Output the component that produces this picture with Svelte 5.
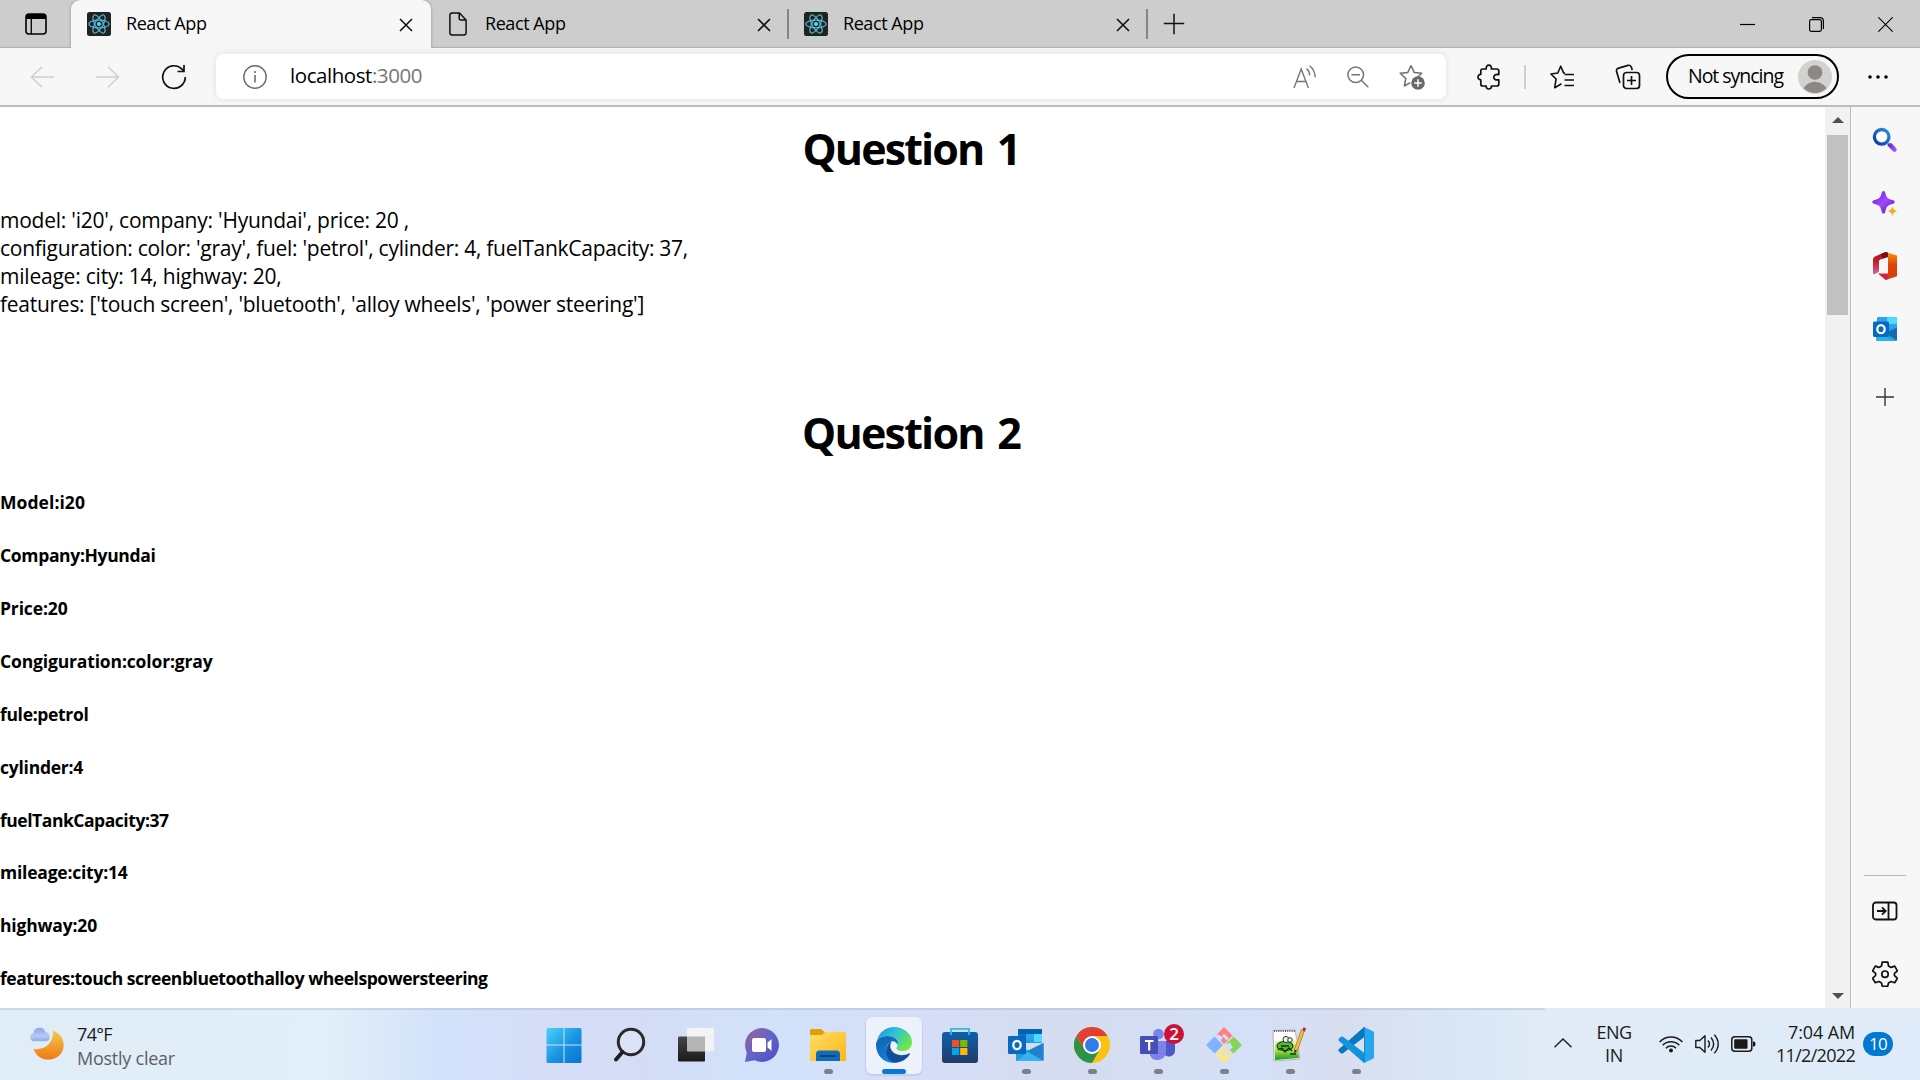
<script>
  const paragraph = [
    ["model: 'i20', company: 'Hyundai', price: 20 ,", 409],
    ["configuration: color: 'gray', fuel: 'petrol', cylinder: 4, fuelTankCapacity: 37,", 688],
    ["mileage: city: 14, highway: 20,", 281.5],
    ["features: ['touch screen', 'bluetooth', 'alloy wheels', 'power steering']", 644]
  ];

  const details = [
    ['Model:i20', 85],
    ['Company:Hyundai', 155.5],
    ['Price:20', 67.5],
    ['Congiguration:color:gray', 212.5],
    ['fule:petrol', 88.5],
    ['cylinder:4', 83],
    ['fuelTankCapacity:37', 168.5],
    ['mileage:city:14', 127.5],
    ['highway:20', 97],
    ['features:touch screenbluetoothalloy wheelspowersteering', 487.5]
  ];

  const apps = [
    { id: 'start' },
    { id: 'search' },
    { id: 'taskview' },
    { id: 'chat' },
    { id: 'explorer', open: true },
    { id: 'edge', active: true },
    { id: 'store' },
    { id: 'outlook', open: true },
    { id: 'chrome', open: true },
    { id: 'teams', open: true },
    { id: 'git', open: true },
    { id: 'notepad', open: true },
    { id: 'vscode', open: true }
  ];

  // Spreads the difference between natural and wanted width over the letters.
  function fit(node, width) {
    const natural = node.getBoundingClientRect().width;
    node.style.letterSpacing = (width - natural) / node.textContent.length + 'px';
  }
</script>

{#snippet reactIcon()}
  <svg class="fav" width="24" height="24" viewBox="0 0 24 24">
    <rect width="24" height="24" rx="2.5" fill="#222" />
    <g fill="none" stroke="#53b9d6" stroke-width="1.2">
      <ellipse cx="12" cy="12" rx="10.2" ry="3.9" />
      <ellipse cx="12" cy="12" rx="10.2" ry="3.9" transform="rotate(60 12 12)" />
      <ellipse cx="12" cy="12" rx="10.2" ry="3.9" transform="rotate(120 12 12)" />
    </g>
    <circle cx="12" cy="12" r="2.1" fill="#5fd3f3" />
  </svg>
{/snippet}

{#snippet closeIcon()}
  <svg class="close" width="14" height="14" viewBox="0 0 14 14"><path d="M1 1l12 12M13 1L1 13" stroke="#111" stroke-width="1.6" /></svg>
{/snippet}

<div class="screen">
  <header class="tabs">
    <div class="tab-actions">
      <svg width="22" height="22" viewBox="0 0 22 22"><rect x="1" y="1" width="20" height="20" rx="3" fill="none" stroke="#000" stroke-width="1.6" /><path d="M1 6V4a3 3 0 0 1 3-3h14a3 3 0 0 1 3 3v2z" /><path d="M6.3 6v15" stroke="#000" stroke-width="1.3" /></svg>
    </div>
    <div class="tab active">
      {@render reactIcon()}
      <span class="title"><span class="t" use:fit={80.5}>React App</span></span>
      {@render closeIcon()}
    </div>
    <div class="tab">
      <svg class="doc" width="18" height="24" viewBox="0 0 18 24"><path d="M3 .9h7.5L17.1 8v12.8a2.2 2.2 0 0 1-2.2 2.2H3.1A2.2 2.2 0 0 1 .9 20.8V3A2.2 2.2 0 0 1 3 .9zM10.2 1v5.500a1.600 1.600 0 0 0 1.600 1.600H17" fill="none" stroke="#111" stroke-width="1.500" /></svg>
      <span class="title"><span class="t" use:fit={80.5}>React App</span></span>
      {@render closeIcon()}
    </div>
    <div class="tab last">
      {@render reactIcon()}
      <span class="title"><span class="t" use:fit={80.5}>React App</span></span>
      {@render closeIcon()}
    </div>
    <svg class="new-tab" width="22" height="22" viewBox="0 0 22 22"><path d="M11 .8v20.400M.8 10.500h20.400" stroke="#111" stroke-width="1.500" /></svg>
    <div class="win">
      <svg width="15" height="15" viewBox="0 0 15 15"><path d="M0 7.500h15" stroke="#000" stroke-width="1.200" /></svg>
      <svg width="15" height="15" viewBox="0 0 15 15" fill="none" stroke="#000" stroke-width="1.200"><rect x=".6" y="2.600" width="11.800" height="11.800" rx="1.800" /><path d="M3 .6h8.400a3 3 0 0 1 3 3V12" /></svg>
      <svg width="15" height="15" viewBox="0 0 15 15"><path d="M.3.3l14.400 14.400M14.700.3L.3 14.700" stroke="#000" stroke-width="1.100" /></svg>
    </div>
  </header>

  <div class="toolbar">
    <svg class="back" width="24" height="22" viewBox="0 0 24 22" fill="none" stroke="#cfcfcf" stroke-width="1.500"><path d="M24 11H1.500M12 .8L1.500 11 12 21.200" /></svg>
    <svg class="fwd" width="24" height="22" viewBox="0 0 24 22" fill="none" stroke="#cfcfcf" stroke-width="1.500"><path d="M0 11h22.500M12 .8L22.500 11 12 21.200" /></svg>
    <svg class="reload" width="26" height="26" viewBox="0 0 26 26" fill="none" stroke="#111" stroke-width="1.700"><path d="M24.300 13A11.300 11.300 0 1 1 20.800 4.900L22.700 7.200" /><path d="M23 1v6.500h-6.500" /></svg>
    <div class="address">
      <svg class="info" width="24" height="24" viewBox="0 0 24 24" fill="none" stroke="#6b6b6b" stroke-width="1.400"><circle cx="12" cy="12" r="11.200" /><path d="M12 10v7.500" stroke-width="1.600" /><circle cx="12" cy="7" r="1.100" fill="#6b6b6b" stroke="none" /></svg>
      <span class="url t" use:fit={132}>localhost<span class="port">:3000</span></span>
      <svg class="aloud" width="24" height="24" viewBox="0 0 24 24" fill="none" stroke="#767676" stroke-width="1.400"><path d="M1 23L8.200 4l7.200 19M3.500 16.500h9.400M13.500 3.500c2 1.800 3.100 4 3.200 7M16.500.8c3.500 2.500 5.500 6 5.600 11.500" /></svg>
      <svg class="zoomout" width="22" height="22" viewBox="0 0 22 22" fill="none" stroke="#767676" stroke-width="1.500"><circle cx="8.700" cy="8.700" r="7.800" /><path d="M14.300 14.300l7 7M4.500 8.700H13" /></svg>
      <svg class="addfav" width="26" height="26" viewBox="0 0 26 26"><path d="M12 1.500l3.200 6.900 7.600.9-5.600 5.200M12 1.500L8.800 8.400l-7.600.9 5.600 5.200-1.500 7.500 6-3.300" fill="none" stroke="#6f6f6f" stroke-width="1.500" stroke-linejoin="round" /><circle cx="19" cy="19" r="6.800" fill="#6a6a6a" /><path d="M19 15.200v7.600M15.200 19h7.600" stroke="#fff" stroke-width="1.500" /></svg>
    </div>
    <svg class="puzzle" width="24" height="26" viewBox="0 0 24 26" fill="none" stroke="#111" stroke-width="1.700" stroke-linejoin="round"><path d="M4.800 5h4.400c-.3-2.400.8-3.800 2.600-3.800s2.900 1.400 2.600 3.800h5.400a2 2 0 0 1 2 2v3.600c-3.400-.6-5 .8-5 2.600s1.600 3.200 5 2.600V20a2 2 0 0 1-2 2h-5.400c.2 1.800-.8 3-2.600 3s-2.800-1.200-2.600-3H5.800a2 2 0 0 1-2-2v-4.100C2 15.700 1 14.700 1 13s1.200-2.700 2.800-2.600V7a2 2 0 0 1 2-2" /></svg>
    <span class="split"></span>
    <svg class="favs" width="24" height="24" viewBox="0 0 24 24" fill="none" stroke="#111" stroke-width="1.600" stroke-linejoin="round"><path d="M15 8.200l-1.400-.3L10.700 1.200 7.800 8 .9 9l5.200 5-1.400 8.700 6.800-4" /><path d="M14.500 9.500H24M14.500 15H24M14.500 20.500H24" /></svg>
    <svg class="coll" width="26" height="26" viewBox="0 0 26 26" fill="none" stroke="#111" stroke-width="1.700"><rect x="8.500" y="8.500" width="16" height="16" rx="3" /><path d="M16.500 12v9M12 16.500h9M5 19L1.600 7.600a2.800 2.800 0 0 1 2-3.500L13 1.400a2.800 2.800 0 0 1 3.400 1.800L17.200 6" /></svg>
    <div class="profile">
      <span class="t" use:fit={95}>Not syncing</span>
      <svg width="34" height="34" viewBox="0 0 34 34"><clipPath id="av"><circle cx="17" cy="17" r="16" /></clipPath><circle cx="17" cy="17" r="17" fill="#d4d2ce" /><circle cx="17" cy="12.500" r="7.300" fill="#8c8884" /><ellipse cx="17" cy="32" rx="12" ry="10.300" fill="#8c8884" clip-path="url(#av)" /></svg>
    </div>
    <svg class="more" width="20" height="4" viewBox="0 0 20 4"><circle cx="2" cy="2" r="1.800" /><circle cx="10" cy="2" r="1.800" /><circle cx="18" cy="2" r="1.800" /></svg>
  </div>

  <div class="middle">
    <main class="page">
      <h1><span class="t" use:fit={217}>Question 1</span></h1>
      <div class="para">
        {#each paragraph as [text, width]}
          <div><span class="t" use:fit={width}>{text}</span></div>
        {/each}
      </div>
      <h1><span class="t" use:fit={218}>Question 2</span></h1>
      {#each details as [text, width]}
        <h5><span class="t" use:fit={width}>{text}</span></h5>
      {/each}
    </main>
    <div class="scroll">
      <svg width="12" height="6" viewBox="0 0 12 6"><path d="M0 6l6-6 6 6z" fill="#505050" /></svg>
      <div class="thumb"></div>
      <svg width="12" height="6" viewBox="0 0 12 6"><path d="M0 0h12L6 6z" fill="#505050" /></svg>
    </div>
    <aside class="side">
      <svg width="26" height="26" viewBox="0 0 26 26"><defs><linearGradient id="sg" x1="1" y1="0" x2="0" y2="1"><stop offset="0" stop-color="#2c93d8" /><stop offset="1" stop-color="#0a35b8" /></linearGradient><linearGradient id="sh" x1="0" y1="0" x2="1" y2="1"><stop stop-color="#6d35d8" /><stop offset="1" stop-color="#9a52fa" /></linearGradient></defs><path d="M16 17l2 2" stroke="#3b4a60" stroke-width="2.500" /><circle cx="9.700" cy="9.800" r="7.300" fill="#fff" stroke="url(#sg)" stroke-width="3.300" /><path d="M18.500 18.500l3.900 4" stroke="url(#sh)" stroke-width="4.600" stroke-linecap="round" /></svg>
      <svg width="26" height="26" viewBox="0 0 26 26"><defs><linearGradient id="sp" x1="0" y1="0" x2="1" y2="1"><stop offset="0" stop-color="#5b21d6" /><stop offset=".5" stop-color="#a347fa" /><stop offset="1" stop-color="#4a1bbd" /></linearGradient></defs><path d="M11.500 0c1 0 1.600.7 2 2.600.9 4 2.400 5.400 6.600 6.300 1.800.4 2.600 1.200 2.600 2s-.8 1.600-2.600 2c-4.200 1-5.700 2.500-6.600 7-.4 2-1 2.700-2 2.700s-1.600-.7-2-2.700c-.9-4.500-2.400-6-6.600-7-1.800-.4-2.600-1.200-2.600-2s.8-1.600 2.600-2C7.100 8 8.600 6.600 9.500 2.600c.4-1.900 1-2.600 2-2.600z" fill="url(#sp)" /><path d="M20.500 14.500c.8 3.500 1.500 4.300 5.500 5.600-4 1.300-4.700 2.200-5.500 5.700-.8-3.500-1.500-4.400-5.500-5.700 4-1.300 4.700-2.100 5.500-5.600z" fill="#f4ae11" stroke="#f7f7f7" stroke-width=".5" /></svg>
      <svg width="26" height="28" viewBox="0 0 26 28"><defs><linearGradient id="of" x1="0" y1="0" x2="0" y2="1"><stop stop-color="#f29a08" /><stop offset=".45" stop-color="#de4309" /><stop offset="1" stop-color="#d83b01" /></linearGradient><linearGradient id="og" x1="0" y1="0" x2="0" y2="1"><stop stop-color="#a51318" /><stop offset=".5" stop-color="#c82432" /><stop offset="1" stop-color="#c768ad" /></linearGradient></defs><path d="M13.500 0L3 4.500Q1 5.500 1 7.500v13q0 2.500 2 1.500l3-1.700q1-.6 1-2V9.500q0-1.500 1.400-2.100L16 5V.7z" fill="url(#og)" /><path d="M13.500 0L25 3.600v20.700L13.700 28 16 25V.7z" fill="url(#of)" /><path d="M13.500 0l-5 2.200L11 6.500l5-1.700V.7z" fill="#820b12" /><path d="M6 21.500h10V27l-2.500 1z" fill="#ce2342" /></svg>
      <svg width="26" height="26" viewBox="0 0 26 26"><path d="M6 1h17.500a1.500 1.500 0 0 1 1.500 1.500V18H5V2q0-1 1-1z" fill="#28a5e8" /><path d="M15 1h10v7H15z" fill="#50d9ff" /><path d="M4 12h21v11.500a1.500 1.500 0 0 1-1.500 1.500H5.500A1.500 1.500 0 0 1 4 23.500z" fill="#199fe2" /><path d="M25 11.500v13L14 17z" fill="#1768ac" /><path d="M4 16l20 9H5.500Q4 25 4 23z" fill="#28b3eb" /><rect x="1" y="5.500" width="16" height="15.500" rx="1.500" fill="#0369c6" /><ellipse cx="9" cy="13.200" rx="3.700" ry="4" fill="none" stroke="#fff" stroke-width="2.300" /></svg>
      <svg class="plus" width="18" height="18" viewBox="0 0 18 18"><path d="M9 0v18M0 9h18" stroke="#333" stroke-width="1.400" /></svg>
      <div class="rule"></div>
      <svg class="panel" width="26" height="20" viewBox="0 0 26 20" fill="none" stroke="#111" stroke-width="1.800"><rect x="1" y="1.500" width="23.500" height="17" rx="2.800" /><path d="M16.500 1.500v17M5 10h8.500M10 6.400L13.700 10 10 13.600" /></svg>
      <svg width="26" height="26" viewBox="0 0 26 26" fill="none" stroke="#111" stroke-width="1.700" stroke-linejoin="round"><path d="M10.200 1.100h5.600l.7 3.900 2.500 1.400 3.700-1.300 2.700 4.700-3 2.600v2l3 2.900-2.700 4.400-3.700-1.200-2.500 1.500-.8 3.300h-5.400l-.8-3.300L7 20.500l-3.700 1.200L.6 17.300l3-2.900v-2l-3-2.600 2.700-4.700L7 6.400 9.500 5z" /><circle cx="13" cy="13.200" r="3.200" /></svg>
    </aside>
  </div>

  <footer class="taskbar">
    <div class="weather">
      <svg width="36" height="34" viewBox="0 0 36 34"><defs><linearGradient id="mo" x1="0" y1="0" x2="0" y2="1"><stop stop-color="#f3cc4a" /><stop offset="1" stop-color="#ee7816" /></linearGradient><linearGradient id="cl" x1="0" y1="0" x2="0" y2="1"><stop stop-color="#82a5ea" /><stop offset=".6" stop-color="#b9cbf3" /><stop offset="1" stop-color="#85aaea" /></linearGradient></defs><path d="M24 3.500C32 7 36.500 14 34 22.500 30.500 34.500 10 37.500 4.500 22 15 23.500 25 17 24 3.500z" fill="url(#mo)" /><path d="M4.500 14.500A4.400 4.400 0 0 1 4 6a6.600 6.600 0 0 1 12.800-1 4.900 4.900 0 0 1 1 9.500z" fill="url(#cl)" stroke="#e2edf7" stroke-width=".6" /></svg>
      <div class="conditions"><div><span class="t" use:fit={35}>74°F</span></div><div class="muted"><span class="t" use:fit={98}>Mostly clear</span></div></div>
    </div>

    <nav class="apps">
      {#each apps as app}
        <div class="app">
          <div class="tile" class:on={app.active}>
            <svg width="36" height="36" viewBox="0 0 36 36">
              {#if app.id === 'start'}
                <defs><linearGradient id="wg" x1="0" y1="0" x2="1" y2="1"><stop stop-color="#4fd0fb" /><stop offset=".55" stop-color="#1793e0" /><stop offset="1" stop-color="#0673d0" /></linearGradient></defs>
                <path d="M2 1h15.500v16.500H.5V2.500Q.5 1 2 1zM18.500 1H34q1.500 0 1.500 1.500v15h-17zM.5 18.500h17V36H2Q.5 36 .5 34.500zM18.500 18.500h17v16q0 1.500-1.500 1.500H18.500z" fill="url(#wg)" />
              {:else if app.id === 'search'}
                <circle cx="19" cy="15" r="12.700" fill="#e4e9f7" fill-opacity=".5" stroke="#2a2a2c" stroke-width="3" /><path d="M10.500 25l-6.500 7.500" stroke="#1f1f20" stroke-width="4" stroke-linecap="round" />
              {:else if app.id === 'taskview'}
                <defs><linearGradient id="tv" x1="0" y1="0" x2="0" y2="1"><stop stop-color="#464646" /><stop offset="1" stop-color="#1b1b1b" /></linearGradient></defs>
                <rect x="0" y="9.500" width="27" height="25" rx="1.200" fill="url(#tv)" /><rect x="9" y=".7" width="27" height="23.500" rx="1.200" fill="#f3f3f3" /><path d="M9 9.500h18v14.700H9z" fill="#b4b4b4" />
              {:else if app.id === 'chat'}
                <defs><linearGradient id="ch" x1="0" y1="0" x2="1" y2="1"><stop stop-color="#9a6296" /><stop offset=".5" stop-color="#6264c6" /><stop offset="1" stop-color="#4a4fc2" /></linearGradient></defs>
                <path d="M18 1a17 17 0 1 1-7.500 32.300L1 35l1.800-9.500A17 17 0 0 1 18 1z" fill="url(#ch)" /><rect x="8" y="11" width="14" height="14" rx="2" fill="#fff" /><path d="M23.500 15.500l4-3.200v11.400l-4-3.200z" fill="#fff" />
              {:else if app.id === 'explorer'}
                <defs><linearGradient id="ex" x1="0" y1="0" x2="1" y2="1"><stop stop-color="#ffdc6a" /><stop offset="1" stop-color="#fdb813" /></linearGradient></defs>
                <path d="M1.500 2H11l4 3.500H33q1 0 1 1V12H0V3.500Q0 2 1.500 2z" fill="#dda008" /><path d="M0 8h12l3.500-3.300H34.500Q36 4.700 36 6.200V34H0z" fill="url(#ex)" /><path d="M6 34v-7q0-3.500 3.500-3.500h17q3.500 0 3.500 3.500v7z" fill="#0f6cbd" /><path d="M10.500 29h15" stroke="#0a4480" stroke-width="1.800" stroke-linecap="round" />
              {:else if app.id === 'edge'}
                <defs><linearGradient id="e1" x1="0" y1="0" x2="1" y2=".6"><stop stop-color="#1b8fd8" /><stop offset=".45" stop-color="#2bc0dc" /><stop offset="1" stop-color="#6ee848" /></linearGradient><linearGradient id="e2" x1="0" y1="0" x2=".6" y2="1"><stop stop-color="#1160ad" /><stop offset="1" stop-color="#0b84dc" /></linearGradient></defs>
                <path d="M1 14C3 5 10 0 18 0c10 0 18 7 18 15 0 6-4.500 9-9.500 9-3.500 0-6-1.300-6-2.800 0-1 1.500-1.800 1.500-4.700C22 12 17 9 11.500 9 7 9 3 11 1 14z" fill="url(#e1)" /><path d="M0 18c0-5.500 5-9 11.500-9C17 9 22 12 22 16l-.4 2c-.8-2.500-3.500-4.200-5.500-3.800C12 16 9.600 20 10.500 25c1 6 5 10 9.500 10.800C9 37.300 0 29 0 18z" fill="url(#e2)" /><path d="M14 15.500C7.500 21 9 34 20 35.800c6-.7 11-4 13.700-8.500.4-.8-.2-1.200-1-.8C25 30.500 14.500 27 14.200 19q0-2 1.200-4z" fill="#124f99" />
              {:else if app.id === 'store'}
                <defs><linearGradient id="st" x1="0" y1="0" x2="0" y2="1"><stop stop-color="#0d62ac" /><stop offset="1" stop-color="#213a68" /></linearGradient></defs>
                <rect x="0" y="5" width="36" height="31" rx="3" fill="url(#st)" /><path d="M9 8V1.800h18V8" fill="none" stroke="#27bdf2" stroke-width="1.800" /><path d="M10 13h7.200v7H10z" fill="#f25022" /><path d="M18.200 13h7.200v7h-7.200z" fill="#7fba00" /><path d="M10 21h7.200v7H10z" fill="#00a4ef" /><path d="M18.200 21h7.200v7h-7.200z" fill="#ffb900" />
              {:else if app.id === 'outlook'}
                <path d="M10 2h24v14H10z" fill="#1d9fe3" /><path d="M10 2h24v5H10z" fill="#0364b0" /><path d="M18 7h8v6h-8z" fill="#28a8ea" /><path d="M26 7h8v8h-8z" fill="#50d9ff" /><path d="M10 7h8v12h-8z" fill="#0a72c4" /><path d="M8 17l13 7 14.500-8v17q0 1-1 1H9q-1 0-1-1z" fill="#1f9fe2" /><path d="M35.500 16v17.500L19 24z" fill="#2380cf" /><path d="M9 34h26L20 25z" fill="#37b4ee" /><rect x="0" y="9" width="18" height="18" rx="1.200" fill="#0a68bf" /><ellipse cx="9" cy="18" rx="3.700" ry="4.100" fill="none" stroke="#fff" stroke-width="2.300" />
              {:else if app.id === 'chrome'}
                <circle cx="18" cy="18" r="18" fill="#fdc112" /><path d="M18 18V9h15.600A18 18 0 0 0 2.400 9l7.800 13.500z" fill="#df4033" /><path d="M2.400 9A18 18 0 0 0 18 36l7.800-13.500L18 27l-7.800-4.500z" fill="#2d9447" /><circle cx="18" cy="18" r="9" fill="#fff" /><circle cx="18" cy="18" r="7" fill="#2f7de9" />
              {:else if app.id === 'teams'}
                <circle cx="18.500" cy="7" r="5.300" fill="#7b83eb" /><circle cx="29.500" cy="9" r="4" fill="#5059c9" /><path d="M25 14h10v9.500a6 6 0 0 1-10 4.500z" fill="#5059c9" /><path d="M10 14h16v11a8.500 8.500 0 0 1-16 3.500z" fill="#7b83eb" /><rect x="0" y="9" width="18" height="18" rx="1.200" fill="#454db8" /><path d="M5 14h8.500M9.200 14v9.500" stroke="#fff" stroke-width="2.200" />
              {:else if app.id === 'git'}
                <path d="M18 0l8.500 8.500L18 17l-3-3 2-4-5-2.500-2 1z" fill="#ff8080" /><path d="M8.500 9.500L17 18l-8.500 8.500L0 18z" fill="#80b3ff" /><path d="M27.500 9.500L36 18l-8.500 8.500-4-4 2.500-2-1.500-5-5 2z" fill="#87d45c" /><path d="M18 19l3 3-1.500 3 4 2.500 3-.5L18 36l-8.500-8.500z" fill="#ffe680" />
                <path d="M18 8.500l3 3M25 20l-3 2M16 25l2 3" stroke="#d5def5" stroke-width="3" stroke-linecap="round" />
              {:else if app.id === 'notepad'}
                <defs><linearGradient id="np" x1="0" y1="0" x2="0" y2="1"><stop stop-color="#f7fbda" /><stop offset=".5" stop-color="#b4e34c" /><stop offset="1" stop-color="#159a22" /></linearGradient></defs>
                <path d="M1 3.500l22-.5 5 29-26 2z" fill="#fff" stroke="#999" stroke-width=".7" /><path d="M2 4h21" stroke="#555" stroke-width="2" stroke-dasharray="1 1.200" /><path d="M2.500 14l22-2 2.500 19-24 2z" fill="url(#np)" /><ellipse cx="13" cy="19" rx="8" ry="4.500" fill="#58bb38" stroke="#173b12" stroke-width="1.200" /><circle cx="14" cy="12.500" r="3" fill="#eef6e2" stroke="#263a20" /><circle cx="18" cy="13" r="2.300" fill="#eef6e2" stroke="#263a20" /><path d="M6 23l4-2 3 4 4-4 3 3M9 19h8M18 27h6" fill="none" stroke="#17380f" stroke-width="1.300" /><path d="M31 3L23.500 24" stroke="#a87016" stroke-width="3.800" /><path d="M31 3L23.800 23" stroke="#f4bd45" stroke-width="2.400" /><path d="M31 1.500l1.500.7-.8 2" stroke="#b32838" stroke-width="2.500" /><path d="M22.200 27l.3-4 2.200.8z" fill="#292929" />
              {:else}
                <path d="M26 0l9 4.200q1 .5 1 1.800v24q0 1.300-1 1.800L26 36z" fill="#27a7f0" /><path d="M26 0L.8 22.300q-.9 1 0 2l2 1.900q1 .8 2.200 0L27 9.500z" fill="#0879be" /><path d="M26 36L.8 13.700q-.9-1 0-2l2-1.900q1-.8 2.200 0L27 26.500z" fill="#1294db" /><path d="M26 0v36l1-.5V.5z" fill="#1a87c9" />
              {/if}
            </svg>
            {#if app.id === 'teams'}<span class="count">2</span>{/if}
            <i class:dot={app.open} class:bar={app.active}></i>
          </div>
        </div>
      {/each}
    </nav>

    <div class="tray">
      <svg class="chev" width="18" height="10" viewBox="0 0 18 10"><path d="M.5 9.300L9 1l8.500 8.300" fill="none" stroke="#222" stroke-width="1.500" /></svg>
      <div class="lang"><div><span class="t" use:fit={35}>ENG</span></div><div><span class="t" use:fit={18}>IN</span></div></div>
      <svg class="wifi" width="24" height="18" viewBox="0 0 24 18" fill="none" stroke="#1a1a1a" stroke-width="1.500"><path d="M.6 7a15.500 15.500 0 0 1 22.800 0M3.700 10.300a11.500 11.500 0 0 1 16.600 0M6.900 13.200a7.200 7.200 0 0 1 10.200 0" /><circle cx="12" cy="15.500" r="2" fill="#1a1a1a" stroke="none" /></svg>
      <svg class="vol" width="25" height="20" viewBox="0 0 25 20" fill="none" stroke="#1a1a1a" stroke-width="1.400"><path d="M.8 6.500h4L10 1.800v16.400l-5.200-4.700h-4z" stroke-linejoin="round" /><path d="M13 6.500c1.700 2 1.700 5 0 7M16 3.500c3.300 4 3.300 9 0 13M19.300 .8c5.200 5.500 5.200 13 0 18.400" /></svg>
      <svg class="batt" width="25" height="16" viewBox="0 0 25 16"><rect x=".8" y=".8" width="20" height="14.400" rx="3" fill="none" stroke="#1a1a1a" stroke-width="1.500" /><rect x="3.200" y="3.300" width="13.300" height="9.400" rx="1" fill="#1a1a1a" /><path d="M22 5.500h1q1.500 0 1.500 2.500T23 10.500h-1z" fill="#1a1a1a" /></svg>
      <div class="clock"><div><span class="t" use:fit={67}>7:04 AM</span></div><div><span class="t" use:fit={79}>11/2/2022</span></div></div>
      <span class="badge"><span class="t" use:fit={18}>10</span></span>
    </div>
  </footer>
</div>

<style>
  :global(body) { margin: 0; overflow: hidden; }
  .screen { width: 1920px; height: 1080px; display: flex; flex-direction: column; font-family: 'Open Sans', 'Noto Sans', sans-serif; color: #000; background: #fff; overflow: hidden; }
  svg { display: block; flex: none; }
  .t { display: inline-block; white-space: pre; }

  .tabs { height: 48px; box-sizing: border-box; background: #cdcdcd; display: flex; align-items: center; font-size: 18px; box-shadow: inset 0 -2px 1px -1px #b0b0b0; flex: none; }
  .tab-actions { width: 46px; padding-left: 25px; }
  .tab { width: 358px; height: 30px; box-sizing: border-box; display: flex; align-items: center; padding: 0 16px 0 15px; border-right: 2px solid #858585; }
  .tab.last { width: 359px; }
  .tab.active { width: 360px; height: 48px; background: #f7f7f7; border: 0; border-radius: 9px 9px 0 0; padding: 0 18px 0 16px; box-shadow: 0 0 3px rgba(0, 0, 0, .3); clip-path: inset(0 -4px 0 -4px); }
  .tab .title { flex: 1; margin-left: 15px; line-height: 26px; padding-bottom: 2px; }
  .tab .doc { margin-left: 3px; }
  .tab .doc + .title { margin-left: 18px; }
  .close { margin-top: 2px; }
  .new-tab { margin-left: 15px; }
  .win { margin-left: auto; margin-right: 27px; display: flex; gap: 54px; }

  .toolbar { height: 57px; background: #f7f7f7; display: flex; align-items: center; flex: none; border-bottom: 2px solid #bdbdbd; }
  .back { margin-left: 30px; }
  .fwd { margin-left: 42px; }
  .reload { margin-left: 41px; }
  .address { margin-left: 29px; width: 1230px; height: 45px; box-sizing: border-box; background: #fff; border-radius: 7px; box-shadow: 0 0 7px rgba(0, 0, 0, .1); display: flex; align-items: center; padding: 0 21px 0 27px; }
  .url { margin-left: 23px; font-size: 20.500px; line-height: 28px; padding-bottom: 3px; flex: none; }
  .port { color: #767676; }
  .aloud { margin-left: auto; }
  .zoomout { margin-left: 30px; }
  .addfav { margin-left: 30px; }
  .puzzle { margin-left: 31px; }
  .split { width: 2px; height: 24px; background: #d0d0d0; margin-left: 23px; }
  .favs { margin-left: 24px; }
  .coll { margin-left: 41px; }
  .profile { margin-left: 25px; width: 173px; height: 45px; box-sizing: border-box; border: 2px solid #000; border-radius: 23px; display: flex; align-items: center; justify-content: space-between; padding: 0 5px 0 20px; font-size: 19.500px; }
  .profile .t { line-height: 26px; padding-bottom: 1px; }
  .more { margin-left: 29px; }

  .middle { height: 901px; display: flex; flex: none; }
  .page { width: 1825px; height: 901px; overflow: hidden; }
  h1, h5 { margin: 0; font-weight: 700; }
  h1 { font-size: 43px; line-height: 60px; text-align: center; padding: 12px 3px 0 0; word-spacing: 4px; }
  .para { font-size: 21px; line-height: 28px; padding-top: 27px; height: 185px; }
  .para div { height: 28px; }
  h5 { font-size: 17.500px; line-height: 24px; height: 24px; margin-bottom: 28.930px; }
  h1 + h5 { margin-top: 27px; }
  .scroll { width: 25px; background: #f1f1f1; border-right: 1px solid #bbb; display: flex; flex-direction: column; align-items: center; padding: 10px 0 9px; box-sizing: content-box; height: 882px; }
  .thumb { width: 21px; height: 180px; background: #c1c1c1; margin: 12px 0 auto; }
  .side { width: 69px; background: #f7f7f7; display: flex; flex-direction: column; align-items: center; padding: 20px 1px 0 0; box-sizing: border-box; }
  .side svg + svg { margin-top: 38px; }
  .side svg:nth-child(3) { margin-top: 35px; }
  .side svg:nth-child(4) { margin-top: 36px; }
  .side .plus { margin-top: 46px !important; }
  .rule { width: 42px; height: 1px; background: #bbb; margin-top: auto; }
  .panel { margin-top: 25px; }
  .side .panel + svg { margin: 40px 0 21px; }

  .taskbar { height: 72px; display: flex; align-items: center; position: relative; flex: none; font-size: 18px; color: #1a1a1a; background: linear-gradient(90deg, #e0ecf6 0, #e3eff8 320px, #d3e2fb 440px, #d5ddf7 550px, #d5dcf5 630px, #d1e2fa 775px, #d6def8 900px, #d5dcef 1080px, #d4e0f7 1240px, #d8def0 1340px, #d9e5f6 1440px, #e0ebf7 1540px, #dfebf8 1920px); }
  .taskbar::before { content: ''; position: absolute; left: 0; top: 0; width: 1545px; height: 2px; background: rgba(90, 110, 150, .16); }
  .weather { width: 531px; box-sizing: border-box; padding-left: 29px; display: flex; align-items: center; gap: 12px; line-height: 24px; }
  .conditions { padding-top: 3px; }
  .muted { color: #5a6067; }
  .apps { display: flex; margin-top: 3px; }
  .app { width: 66px; display: flex; justify-content: center; }
  .tile { width: 56px; height: 57px; position: relative; display: flex; justify-content: center; align-items: flex-start; padding-top: 10px; box-sizing: border-box; border-radius: 6px; }
  .tile.on { background: #ecf1fb; box-shadow: 0 1px 1px 1px rgba(120, 140, 180, .18); }
  .tile i { position: absolute; bottom: 0; left: 24px; }
  .dot { width: 9px; height: 5px; border-radius: 3px; background: #7c808b; }
  .tile .bar { width: 24px; height: 5px; border-radius: 3px; background: #0a78d6; left: 16px; }
  .count { position: absolute; left: 34px; top: 7px; width: 20px; height: 20px; border-radius: 50%; background: #cb1335; color: #fff; font-size: 17px; line-height: 20px; text-align: center; font-weight: 600; }
  .tray { margin-left: 165px; display: flex; align-items: center; line-height: 23px; }
  .lang { margin-left: 23px; width: 38px; text-align: center; }
  .chev { margin-bottom: 2px; }
  .wifi { margin-left: 26px; }
  .vol { margin-left: 12px; }
  .batt { margin-left: 11px; }
  .clock { width: 99px; text-align: right; padding-bottom: 1px; }
  .badge { margin-left: 8px; width: 30px; height: 24px; border-radius: 12px; background: #0078d4; color: #fff; text-align: center; font-size: 17px; line-height: 23px; }
</style>
